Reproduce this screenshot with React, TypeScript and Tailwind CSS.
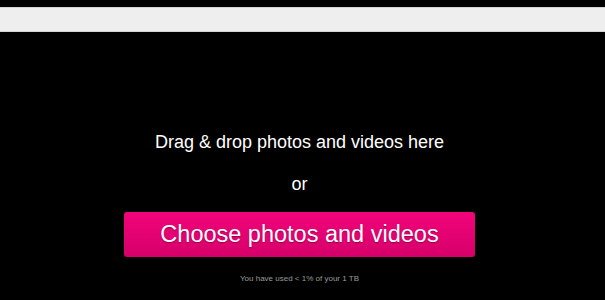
import React from 'react';

const App: React.FC = () => {
  return (
    <div className="w-[605px] h-[300px] bg-black overflow-hidden font-['Liberation_Sans',Arial,sans-serif]">
      <div className="h-[7px]" />
      <div className="h-[25px] bg-[#eeeeee] border-y border-[#d4d4d4]" />
      <div className="flex flex-col items-center pr-[6px]">
        <p className="mt-[99px] text-[18px] leading-[22px] text-white">Drag &amp; drop photos and videos here</p>
        <p className="mt-[20px] text-[18px] leading-[22px] text-white">or</p>
        <button className="mt-[17px] w-[351px] h-[45px] rounded-[3px] bg-gradient-to-b from-[#f2047a] to-[#d6006a] text-white text-[23.5px] leading-none [text-shadow:0_1px_1px_rgba(0,0,0,0.35)]">
          Choose photos and videos
        </button>
        <p className="mt-[17px] text-[8px] leading-[10px] text-[#9a9a9a]">You have used &lt; 1% of your 1 TB</p>
      </div>
    </div>
  );
};

export default App;
